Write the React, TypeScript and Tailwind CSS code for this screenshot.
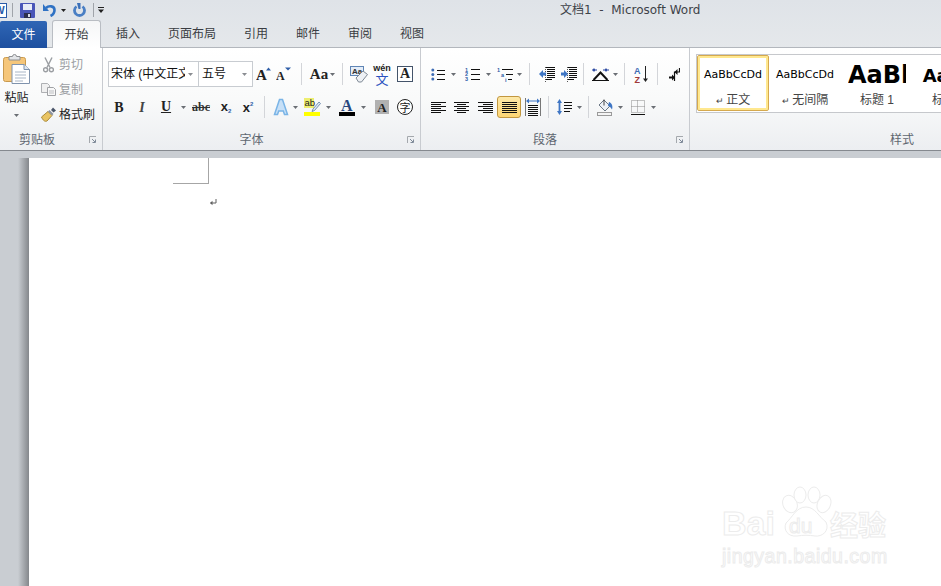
import type { ReactNode } from "react";

const CJK = "font-['Liberation_Sans','Noto_Sans_CJK_SC',sans-serif]";
const SERIF = "'Liberation Serif', serif";

function Cell({ className, children }: { className: string; children?: ReactNode }) {
  return <div className={`flex h-[22px] shrink-0 items-center justify-center ${className}`}>{children}</div>;
}

function Caret({ color = "#6a6e74" }: { color?: string }) {
  return (
    <svg width="5" height="3" viewBox="0 0 5 3">
      <path d="M0 0h5L2.500 3z" fill={color} />
    </svg>
  );
}

function Sep() {
  return <div className="h-[22px] w-px bg-[#d3d5d9]" />;
}

function Launcher() {
  return (
    <svg width="8" height="8" viewBox="0 0 8 8" fill="none">
      <path d="M0.500 7V0.500H7" stroke="#a4a8ad" />
      <path d="M3 3l3 3M6.500 3.500v3h-3" stroke="#7f8a99" />
    </svg>
  );
}

function Lines({ rows }: { rows: [number, number][] }) {
  return (
    <svg width="15" height="11" viewBox="0 0 15 11">
      {rows.map(([x, w], i) => (
        <rect key={i} x={x} y={i * 2} width={w} height="1" fill="#111" />
      ))}
    </svg>
  );
}

const LEFT: [number, number][] = [[0, 15], [0, 10], [0, 15], [0, 10], [0, 15], [0, 10]];
const CENTER: [number, number][] = [[0, 15], [3, 9], [0, 15], [3, 9], [0, 15], [3, 9]];
const RIGHT: [number, number][] = [[0, 15], [5, 10], [0, 15], [5, 10], [0, 15], [5, 10]];
const FULL: [number, number][] = [[0, 15], [0, 15], [0, 15], [0, 15], [0, 15], [0, 15]];

function Paste() {
  return (
    <svg width="27" height="30" viewBox="0 0 27 30">
      <rect x="0.500" y="3.500" width="22" height="24" rx="2" fill="#f5c67a" stroke="#c99a4e" />
      <path d="M6 5V2.500h3.500a2 2 0 014 0H17V6H6z" fill="#e3e5e8" stroke="#8d8f92" />
      <path d="M9 10.500h12l5.500 5V29.500H9z" fill="#fff" stroke="#7f93ad" />
      <path d="M21 10.500v5h5.500" fill="#dfe8f3" stroke="#7f93ad" />
      <path d="M12 18h11M12 21h11M12 24h11M12 27h8" stroke="#a9b6c6" />
    </svg>
  );
}

function Scissors() {
  return (
    <svg width="11" height="16" viewBox="0 0 11 16" fill="none" stroke="#9b9ea2" strokeWidth="1.400">
      <path d="M2 0.500l5 10M9 0.500l-5 10" />
      <circle cx="2.600" cy="12.800" r="2" />
      <circle cx="8.400" cy="12.800" r="2" />
    </svg>
  );
}

function CopyIcon() {
  return (
    <svg width="15" height="13" viewBox="0 0 15 13">
      <path d="M0.500 0.500h6l2 2v7h-8z" fill="#f0f0f0" stroke="#aeb0b3" />
      <path d="M6.500 4.500h6l2 2v6h-8z" fill="#f8f8f8" stroke="#a0a2a5" />
      <path d="M8 8h5M8 10h5" stroke="#bdbfc2" />
    </svg>
  );
}

function Brush() {
  return (
    <svg width="16" height="15" viewBox="0 0 16 15">
      <path d="M0.500 10L7 4.500l4 4L6 14c-2 1-4-.5-5.500-4z" fill="#e9c463" stroke="#a98a3a" />
      <path d="M7 4.500l4 4 1.500-1.500-4-4z" fill="#8c93a0" />
      <path d="M10 3l2-2.500 3 3-2.500 2z" fill="#4a5568" />
    </svg>
  );
}

function Grow({ up }: { up: boolean }) {
  return (
    <svg width="16" height="14" viewBox="0 0 16 14">
      <text x="0" y="13" fontFamily={SERIF} fontWeight="700" fontSize={up ? 15 : 12} fill="#222">A</text>
      <path d={up ? "M10 3.500h5L12.500 0.500z" : "M9 0.500h6l-3 3z"} fill="#2f5ea8" />
    </svg>
  );
}

function CaseIcon() {
  return (
    <div className="flex items-center gap-[2px]">
      <span className="font-['Liberation_Serif',serif] text-[15px] leading-none font-bold text-[#222]">Aa</span>
      <Caret />
    </div>
  );
}

function ClearFormat() {
  return (
    <svg width="18" height="17" viewBox="0 0 18 17">
      <rect x="0.500" y="0.500" width="13" height="9" fill="#e4edf8" stroke="#5f85b5" />
      <text x="2" y="8" fontFamily="'Liberation Sans', sans-serif" fontSize="8" fontWeight="700" fill="#333">Aa</text>
      <path d="M6 12l7-7 4.500 3.500-6 7.500H8.500z" fill="#eef1f5" stroke="#7d8793" />
    </svg>
  );
}

function Pinyin() {
  return (
    <div className="flex h-[21px] w-[17px] flex-col items-center">
      <span className="h-[8px] font-['Liberation_Sans',sans-serif] text-[9px] leading-[8px] font-bold text-[#222]">wén</span>
      <span className="h-[13px] font-['Noto_Sans_CJK_SC',sans-serif] text-[13px] leading-[13px] text-[#2b52c0]">文</span>
    </div>
  );
}

function BoxA() {
  return (
    <div className="flex h-[16px] w-[16px] items-center justify-center border border-[#44546a] bg-white font-['Liberation_Serif',serif] text-[14px] leading-none font-bold text-[#222]">
      A
    </div>
  );
}

function Strike() {
  return (
    <span className="relative font-['Liberation_Serif',serif] text-[12px] leading-none font-bold text-[#333]">
      abc
      <span className="absolute top-[6px] right-0 left-0 h-px bg-[#333]" />
    </span>
  );
}

function Script({ sup }: { sup?: boolean }) {
  return (
    <span className="flex font-['Liberation_Sans',sans-serif] text-[13px] leading-none font-bold text-[#222]">
      x
      <span className={`text-[6px] text-[#2f5ea8] ${sup ? "" : "mt-[8px]"}`}>2</span>
    </span>
  );
}

function Effect() {
  return (
    <svg width="16" height="18" viewBox="0 0 16 18">
      <path d="M1.500 16.500L6.500 1.500h3l5 15h-3L10.300 13H5.700l-1.200 3.500z" fill="#c7e0f7" stroke="#7ab4e6" strokeWidth="1.500" />
    </svg>
  );
}

function Highlight() {
  return (
    <svg width="17" height="18" viewBox="0 0 17 18">
      <rect x="0" y="0" width="10" height="10" fill="#eeee70" />
      <text x="0.500" y="8" fontFamily="'Liberation Sans', sans-serif" fontSize="9.500" fill="#222">ab</text>
      <path d="M9 11l6-7 1.500 1.500-6 7L8 13.500z" fill="#dfe8f3" stroke="#5a7ba6" strokeWidth="0.800" />
      <rect x="0" y="14" width="16" height="4" fill="#ffff00" />
    </svg>
  );
}

function FontColor() {
  return (
    <svg width="16" height="18" viewBox="0 0 16 18">
      <text x="2" y="12.500" fontFamily={SERIF} fontWeight="700" fontSize="16" fill="#27477e">A</text>
      <rect x="0" y="14" width="16" height="4" fill="#000" />
    </svg>
  );
}

function ShadeA() {
  return (
    <div className="flex h-[14px] w-[14px] items-center justify-center bg-[#b1b1b1] font-['Liberation_Serif',serif] text-[13px] leading-none font-bold text-[#222]">
      A
    </div>
  );
}

function CircleChar() {
  return (
    <div className="flex h-[16px] w-[16px] items-center justify-center rounded-full border border-[#222] bg-white font-['Noto_Sans_CJK_SC',sans-serif] text-[11px] leading-none text-[#222]">
      字
    </div>
  );
}

function Bullets() {
  return (
    <svg width="14" height="13" viewBox="0 0 14 13">
      <g fill="#3f6db5">
        <circle cx="1.800" cy="2" r="1.500" />
        <circle cx="1.800" cy="6.500" r="1.500" />
        <circle cx="1.800" cy="11" r="1.500" />
      </g>
      <path d="M6 2.500h8M6 6.500h8M6 11.500h8" stroke="#111" />
    </svg>
  );
}

function Numbered() {
  return (
    <svg width="15" height="14" viewBox="0 0 15 14">
      <g fontFamily="'Liberation Sans', sans-serif" fontSize="5.500" fontWeight="700" fill="#2f5ea8">
        <text x="0" y="4.500">1</text>
        <text x="0" y="9">2</text>
        <text x="0" y="14">3</text>
      </g>
      <path d="M6 2.500h9M6 7.500h9M6 12.500h9" stroke="#111" />
    </svg>
  );
}

function Multi() {
  return (
    <svg width="16" height="15" viewBox="0 0 16 15">
      <g fontFamily="'Liberation Sans', sans-serif" fontSize="5.500" fontWeight="700" fill="#2f5ea8">
        <text x="0" y="5">1</text>
        <text x="4" y="10">a</text>
        <text x="8" y="15">i</text>
      </g>
      <path d="M5 2.500h11M9 7.500h7M11 12.500h4" stroke="#111" />
    </svg>
  );
}

function Indent({ out }: { out?: boolean }) {
  return (
    <svg width="16" height="15" viewBox="0 0 16 15">
      <path d="M6 0.500h10M8 2.500h8M8 4.500h8M8 6.500h8M8 8.500h8M8 10.500h8M6 12.500h7" stroke="#111" />
      <path d="M6.500 0v15" stroke="#555" strokeDasharray="1 1" />
      {out ? (
        <path d="M0 7l4-4v2.500h3v3H4v2.500z" fill="#3f76c4" />
      ) : (
        <path d="M7 7L3 3v2.500H0v3h3v2.500z" fill="#3f76c4" />
      )}
    </svg>
  );
}

function Asian() {
  return (
    <svg width="17" height="13" viewBox="0 0 17 13">
      <path d="M1.500 12L8.500 4.500 15.500 12" fill="none" stroke="#111" strokeWidth="2" />
      <path d="M0 12.500h17" stroke="#111" />
      <path d="M2 0l1 1.500h2v1H3l-1 1.500-1-1.500H0v-1h1zM14 0l1 1.500h2v1h-2l-1 1.500-1-1.500h-2v-1h2z" fill="#1f3f9b" />
    </svg>
  );
}

function Sort() {
  return (
    <svg width="15" height="17" viewBox="0 0 15 17">
      <text x="0" y="7.500" fontFamily="'Liberation Sans', sans-serif" fontSize="9" fontWeight="700" fill="#3f6db5">A</text>
      <text x="0.500" y="16.500" fontFamily="'Liberation Sans', sans-serif" fontSize="9" fontWeight="700" fill="#a03a3a">Z</text>
      <path d="M11.500 0v15" stroke="#222" />
      <path d="M9 12.500h5L11.500 16z" fill="#222" />
    </svg>
  );
}

function Pilcrow() {
  return (
    <svg width="11" height="13" viewBox="0 0 11 13">
      <path d="M10.500 0v4H5.500v9" fill="none" stroke="#111" strokeWidth="1.200" />
      <path d="M8.500 1L5.500 4l3 3zM0 8.500h3V6.500l3 3-3 3v-2H0z" fill="#111" />
    </svg>
  );
}

function Distributed() {
  return (
    <svg width="16" height="18" viewBox="0 0 16 18">
      <path d="M3 7.500h10M3 9.500h10M3 11.500h10M3 13.500h10M3 15.500h10M3 17.500h10" stroke="#111" />
      <path d="M0.500 0v18M15.500 0v18" stroke="#777" />
      <path d="M1 3l3-2.500v2h8v-2L15 3l-3 2.500v-2H4v2z" fill="#3f76c4" />
    </svg>
  );
}

function LineSpacing() {
  return (
    <svg width="15" height="16" viewBox="0 0 15 16">
      <path d="M2.500 0L5 4H3.400v8H5L2.500 16 0 12h1.600V4H0z" fill="#3f76c4" />
      <path d="M7 3.500h8M7 6.500h8M7 9.500h8M7 12.500h6" stroke="#111" />
    </svg>
  );
}

function Fill() {
  return (
    <svg width="16" height="17" viewBox="0 0 16 17">
      <path d="M7 1l6 6-5 5-6-6z" fill="#eef2f7" stroke="#6b7785" />
      <path d="M7 0.500v6" stroke="#444" />
      <path d="M12 3c3 1 4 4.500 3 7.500-1-1-1.500-3-4-3.500z" fill="#3f76c4" />
      <rect x="0.500" y="13.500" width="14" height="3" fill="#f4f4f4" stroke="#9a9a9a" />
    </svg>
  );
}

function Borders() {
  return (
    <svg width="14" height="15" viewBox="0 0 14 15" fill="none">
      <path d="M0.500 0.500h13v12h-13zM6.500 0.500v12M0.500 6.500h13" stroke="#8a8a8a" strokeDasharray="1 1" />
      <path d="M0 14.500h14" stroke="#111" />
    </svg>
  );
}

function Group({ className, footerClass, label, children }: { className: string; footerClass: string; label: string; children: ReactNode }) {
  return (
    <section className={`flex h-full shrink-0 flex-col border-r border-r-[#c8cbd0] ${className}`}>
      <div className="min-h-0 flex-1">{children}</div>
      <div className={`grid h-[20px] items-center text-[12px] leading-none text-[#5e6670] ${footerClass}`}>
        <span />
        <span>{label}</span>
        <span />
        <span className="flex justify-end pr-[5px]"><Launcher /></span>
      </div>
    </section>
  );
}

function StyleItem({ active, sample, label }: { active?: boolean; sample: ReactNode; label: ReactNode }) {
  return (
    <div
      className={`flex h-[56px] w-[72px] shrink-0 flex-col items-center overflow-hidden rounded-[2px] ${
        active ? "border border-[#d5a94e] shadow-[inset_0_0_0_2px_#ffe88f]" : "border border-transparent"
      }`}
    >
      <div className="flex h-[36px] items-center pt-[2px] whitespace-nowrap text-black">{sample}</div>
      <div className="mt-[2px] text-[12px] leading-none whitespace-nowrap text-[#444]">{label}</div>
    </div>
  );
}

function Watermark() {
  const stroke = "[-webkit-text-stroke:1px_#ececec]";
  return (
    <div className="pointer-events-none absolute top-[486px] left-[722px] h-[82px] w-[170px] text-white">
      <span className={`absolute top-[19px] left-0 font-['Liberation_Sans',sans-serif] text-[34px] leading-[36px] font-bold ${stroke}`}>
        Bai
      </span>
      <svg className="absolute top-0 left-[56px]" width="54" height="52" viewBox="0 0 54 52" fill="#fff" stroke="#ececec" strokeWidth="1">
        <ellipse cx="12" cy="18" rx="7" ry="9" transform="rotate(-25 12 18)" />
        <ellipse cx="22" cy="9" rx="6" ry="8" />
        <ellipse cx="36" cy="9" rx="6" ry="8" />
        <ellipse cx="46" cy="18" rx="6.500" ry="9" transform="rotate(25 46 18)" />
        <path d="M28 21c9 0 13 10 20 15 4 9-4 15-11 14-6-1-12-1-18 0-9 1-14-6-11-13 6-5 10-16 20-16z" />
      </svg>
      <span className={`absolute top-[28px] left-[67px] font-['Liberation_Sans',sans-serif] text-[21px] leading-[24px] ${stroke}`}>
        du
      </span>
      <span className={`absolute top-[22px] left-[108px] font-['Noto_Sans_CJK_SC',sans-serif] text-[28px] leading-[32px] font-bold ${stroke}`}>
        经验
      </span>
      <span className={`absolute top-[59px] left-0 font-['Liberation_Sans',sans-serif] text-[19.500px] leading-[22px] tracking-[0.5px] ${stroke}`}>
        jingyan.baidu.com
      </span>
    </div>
  );
}

export default function App() {
  return (
    <div className={`relative h-[586px] w-[941px] overflow-hidden bg-white ${CJK}`}>
      {/* title bar + tabs */}
      <div className="bg-gradient-to-b from-[#dfe3e8] to-[#e5e8eb]">
        <div className="flex h-[20px] items-center">
          <div className="ml-[-8px] flex h-[15px] w-[15px] items-center justify-center border border-[#2a5ba8] bg-white text-[11px] leading-none font-bold text-[#2a5ba8]">
            W
          </div>
          <div className="ml-[5px] h-[14px] w-px bg-[#a0a4aa]" />
          <svg className="ml-[7px]" width="15" height="15" viewBox="0 0 15 15">
            <rect width="15" height="15" rx="1" fill="#4a56b8" />
            <rect x="3" y="1" width="9" height="6" fill="#e8ecf7" />
            <rect x="4" y="10" width="7" height="5" fill="#2c2f4f" />
            <rect x="8" y="11" width="2" height="3" fill="#d8dbe8" />
          </svg>
          <svg className="ml-[8px]" width="13" height="14" viewBox="0 0 13 14" fill="none">
            <path d="M0 1v7h6z" fill="#2f72c4" />
            <path d="M3 5c2.500-2.500 8.500-2.500 8.500 2 0 2.500-2 5-4 6" stroke="#2f72c4" strokeWidth="2.600" />
          </svg>
          <div className="ml-[5px]"><Caret color="#222" /></div>
          <svg className="ml-[7px]" width="13" height="14" viewBox="0 0 13 14" fill="none">
            <path d="M3.500 3.500A5 5 0 1 0 9.500 3.500" stroke="#4a7fc4" strokeWidth="2.800" />
            <path d="M4 0h3.500v6L5.500 6z" fill="#3a6fb8" />
          </svg>
          <div className="ml-[7px] h-[14px] w-px bg-[#a0a4aa]" />
          <svg className="ml-[4px]" width="6" height="6" viewBox="0 0 6 6">
            <path d="M0 0h6v1H0zM0 2.500h6L3 6z" fill="#222" />
          </svg>
          <div className="ml-[456px] font-['DejaVu_Sans','Noto_Sans_CJK_SC',sans-serif] text-[12px] leading-none whitespace-pre text-[#3e4248]">
            文档1  -  Microsoft Word
          </div>
        </div>
        <div className="flex h-[28px] items-end border-b border-b-[#b3b7bd] text-[12px] text-[#3a3d42]">
          <div className="mb-[-1px] flex h-[27px] w-[47px] items-center justify-center rounded-t-[2px] bg-gradient-to-b from-[#2f66b5] to-[#1d4f9f] text-white">
            文件
          </div>
          <div className="mb-[-1px] ml-[5px] flex h-[28px] w-[49px] items-center justify-center rounded-t-[3px] border border-b-0 border-[#b9bdc3] bg-gradient-to-b from-[#f5f6f7] to-white">
            开始
          </div>
          <div className="ml-[1px] flex h-[27px] items-center">
            <span className="px-[14px]">插入</span>
            <span className="px-[14px]">页面布局</span>
            <span className="px-[14px]">引用</span>
            <span className="px-[14px]">邮件</span>
            <span className="px-[14px]">审阅</span>
            <span className="px-[14px]">视图</span>
          </div>
        </div>
      </div>

      {/* ribbon */}
      <div className="flex h-[103px] border-b border-b-[#85898f] bg-gradient-to-b from-white via-[#f9fafa] to-[#eceef1] text-[12px]">
        <Group className="w-[103px]" footerClass="grid-cols-[1fr_auto_1fr_28px]" label="剪贴板">
          <div className="flex">
            <div className="flex w-[33px] flex-col items-center pt-[6px]">
              <Paste />
              <span className="mt-[8px] leading-none text-[#222]">粘贴</span>
              <div className="mt-[10px]"><Caret /></div>
            </div>
            <div className="mt-[4px] flex flex-col">
              <div className="flex h-[25px] items-center text-[#9b9ea2]">
                <div className="flex w-[26px] justify-center pl-[5px]"><Scissors /></div>剪切
              </div>
              <div className="flex h-[25px] items-center text-[#9b9ea2]">
                <div className="flex w-[26px] justify-center pl-[5px]"><CopyIcon /></div>复制
              </div>
              <div className="flex h-[25px] items-center text-[#222]">
                <div className="flex w-[26px] justify-center pl-[5px]"><Brush /></div>格式刷
              </div>
            </div>
          </div>
        </Group>

        <Group className="w-[318px]" footerClass="grid-cols-[1fr_auto_1fr_20px]" label="字体">
          <div className="pt-[13px] pl-[5px]">
            <div className="flex h-[26px] items-center">
              <div className="flex h-[26px] w-[91px] items-center justify-between border border-[#c8ccd1] bg-white pr-[5px] pl-[2px] text-[#111]">
                <span className="w-[74px] overflow-hidden whitespace-nowrap">宋体 (中文正文)</span>
                <Caret color="#8a8d92" />
              </div>
              <div className="flex h-[26px] w-[54px] items-center justify-between border border-l-0 border-[#c8ccd1] bg-white pr-[5px] pl-[3px] text-[#111]">
                <span>五号</span>
                <Caret color="#8a8d92" />
              </div>
              <Cell className="w-[21px]"><Grow up /></Cell>
              <Cell className="w-[20px]"><Grow up={false} /></Cell>
              <Cell className="w-[14px]"><Sep /></Cell>
              <Cell className="w-[29px]"><CaseIcon /></Cell>
              <Cell className="w-[11px]"><Sep /></Cell>
              <Cell className="w-[22px]"><ClearFormat /></Cell>
              <Cell className="w-[24px]"><Pinyin /></Cell>
              <Cell className="w-[22px]"><BoxA /></Cell>
            </div>
            <div className="mt-[9px] flex items-center">
              <Cell className="w-[22px]"><span className="font-['Liberation_Serif',serif] text-[14px] font-bold text-[#222]">B</span></Cell>
              <Cell className="w-[24px]"><span className="font-['Liberation_Serif',serif] text-[14px] font-bold text-[#444] italic">I</span></Cell>
              <Cell className="w-[24px]"><span className="font-['Liberation_Serif',serif] text-[14px] leading-none font-bold text-[#222] underline">U</span></Cell>
              <Cell className="w-[10px]"><Caret /></Cell>
              <Cell className="w-[26px]"><Strike /></Cell>
              <Cell className="w-[24px]"><Script /></Cell>
              <Cell className="w-[20px]"><Script sup /></Cell>
              <Cell className="w-[12px]"><Sep /></Cell>
              <Cell className="w-[21px]"><Effect /></Cell>
              <Cell className="w-[9px]"><Caret /></Cell>
              <Cell className="w-[24px]"><Highlight /></Cell>
              <Cell className="w-[8px]"><Caret /></Cell>
              <Cell className="ml-[3px] w-[24px]"><FontColor /></Cell>
              <Cell className="w-[8px]"><Caret /></Cell>
              <Cell className="ml-[4px] w-[22px]"><ShadeA /></Cell>
              <Cell className="w-[24px]"><CircleChar /></Cell>
            </div>
          </div>
        </Group>

        <Group className="w-[269px]" footerClass="grid-cols-[1fr_auto_1fr_20px]" label="段落">
          <div className="pt-[13px] pl-[5px]">
            <div className="flex h-[26px] items-center">
              <Cell className="w-[24px]"><Bullets /></Cell>
              <Cell className="w-[7px]"><Caret /></Cell>
              <Cell className="ml-[3px] w-[24px]"><Numbered /></Cell>
              <Cell className="w-[8px]"><Caret /></Cell>
              <Cell className="ml-[2px] w-[22px]"><Multi /></Cell>
              <Cell className="w-[6px]"><Caret /></Cell>
              <Cell className="w-[14px]"><Sep /></Cell>
              <Cell className="w-[22px]"><Indent out /></Cell>
              <Cell className="w-[22px]"><Indent /></Cell>
              <Cell className="w-[6px]"><Sep /></Cell>
              <Cell className="ml-[2px] w-[24px]"><Asian /></Cell>
              <Cell className="w-[6px]"><Caret /></Cell>
              <Cell className="w-[12px]"><Sep /></Cell>
              <Cell className="w-[22px]"><Sort /></Cell>
              <Cell className="w-[10px]"><Sep /></Cell>
              <Cell className="w-[24px]"><Pilcrow /></Cell>
            </div>
            <div className="mt-[9px] flex items-center">
              <Cell className="w-[24px]"><Lines rows={LEFT} /></Cell>
              <Cell className="w-[23px]"><Lines rows={CENTER} /></Cell>
              <Cell className="w-[24px]"><Lines rows={RIGHT} /></Cell>
              <Cell className="w-[24px] rounded-[3px] border border-[#c2973f] bg-gradient-to-b from-[#fde9a8] to-[#fdd573]"><Lines rows={FULL} /></Cell>
              <Cell className="w-[23px]"><Distributed /></Cell>
              <Cell className="w-[8px]"><Sep /></Cell>
              <Cell className="w-[24px]"><LineSpacing /></Cell>
              <Cell className="w-[6px]"><Caret /></Cell>
              <Cell className="w-[12px]"><Sep /></Cell>
              <Cell className="w-[22px]"><Fill /></Cell>
              <Cell className="w-[8px]"><Caret /></Cell>
              <Cell className="ml-[3px] w-[22px]"><Borders /></Cell>
              <Cell className="w-[8px]"><Caret /></Cell>
            </div>
          </div>
        </Group>

        <section className="flex h-full min-w-0 flex-1 flex-col">
          <div className="min-h-0 flex-1 pt-[6px] pl-[6px]">
            <div className="flex h-[59px] items-start border border-r-0 border-[#c6c8cc] bg-white">
              <StyleItem active sample={<span className="font-['DejaVu_Sans',sans-serif] text-[11px]">AaBbCcDd</span>} label={<><span className="text-[9px]">↵ </span>正文</>} />
              <StyleItem sample={<span className="font-['DejaVu_Sans',sans-serif] text-[11px]">AaBbCcDd</span>} label={<><span className="text-[9px]">↵ </span>无间隔</>} />
              <StyleItem sample={<span className="w-[58px] overflow-hidden font-['DejaVu_Sans',sans-serif] text-[24px] font-bold">AaBb</span>} label="标题 1" />
              <StyleItem sample={<span className="font-['DejaVu_Sans',sans-serif] text-[18px] font-bold">AaBb</span>} label="标题 2" />
            </div>
          </div>
          <div className="h-[20px] pl-[200px] text-[12px] leading-[20px] text-[#5e6670]">样式</div>
        </section>
      </div>

      {/* document area */}
      <div className="flex h-[435px] flex-col bg-[#c9cdd2]">
        <div className="h-[7px] shrink-0" />
        <div className="flex min-h-0 flex-1">
          <div className="w-[18px] shrink-0" />
          <div className="w-[11px] shrink-0 bg-gradient-to-r from-[#c9cdd2] to-[#85888c]" />
          <div className="flex-1 bg-white">
            <div className="ml-[144px] h-[26px] w-[36px] border-r border-b border-[#a6a6a6]" />
            <svg className="mt-[15px] ml-[180px]" width="8" height="8" viewBox="0 0 8 8" fill="none">
              <path d="M7 0v4H1.500" stroke="#5f5f5f" />
              <path d="M3.500 1.800L1 4l2.500 2.200z" fill="#5f5f5f" />
            </svg>
          </div>
        </div>
      </div>

      <Watermark />
    </div>
  );
}
